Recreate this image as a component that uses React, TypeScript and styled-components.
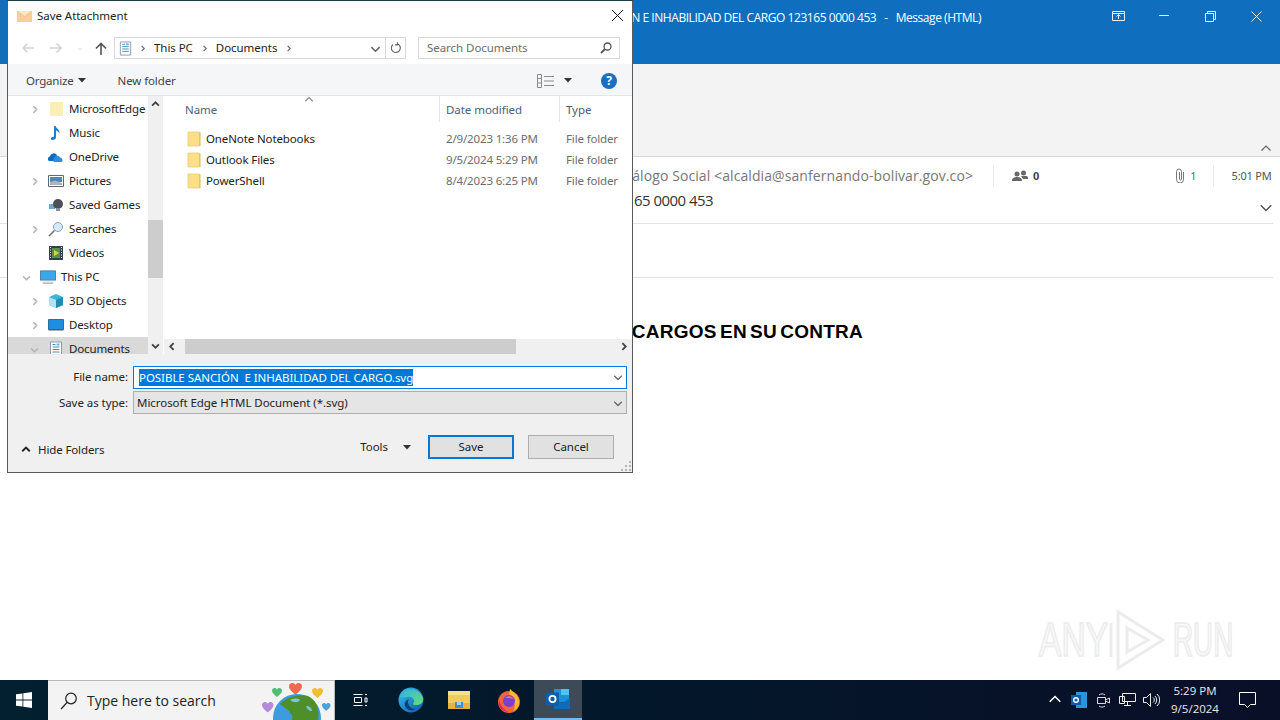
import React from 'react';
import styled, { createGlobalStyle } from 'styled-components';

const Global = createGlobalStyle`
  html, body { margin: 0; padding: 0; height: 100%; overflow: hidden; background: #fff; }
  * { box-sizing: border-box; }
`;
const font = `"Noto Sans", "Open Sans", sans-serif`;

const Desktop = styled.div`
  position: relative; width: 1280px; height: 720px; overflow: hidden;
  display: flex; flex-direction: column; font-family: ${font}; background: #fff;
`;
const MailWindow = styled.div`flex: 1; display: flex; flex-direction: column; min-height: 0;`;
const MailTitleBar = styled.div`
  height: 64px; flex: none; background: #106ebe; color: #fff; display: flex; align-items: flex-start;
`;
const MailTitle = styled.div`
  width: 981px; padding-top: 10px; white-space: pre; font-size: 12px; line-height: 16px;
  letter-spacing: -0.45px; display: flex; justify-content: flex-end;
  font-family: "Open Sans", sans-serif;
`;
const WinControls = styled.div`margin-left: auto; margin-right: 1px; display: flex; width: 184px; height: 32px;`;
const WinControl = styled.div`
  width: 46px; height: 32px; display: flex; align-items: center; justify-content: center; color: #e8f1fa;
`;
const Ribbon = styled.div`
  height: 93px; flex: none; background: #f3f3f3; border-bottom: 1px solid #d4d4d4; display: flex; align-items: flex-end;
  justify-content: flex-end; padding: 0 8px 1px 0; color: #666;
`;
const MailHeader = styled.div`height: 67px; flex: none; margin-right: 7px; border-bottom: 1px solid #e3e3e3; display: flex; flex-direction: column;`;
const HeaderRow = styled.div`height: 36px; flex: none; display: flex; align-items: center; color: #555; font-size: 11px; padding-top: 1px;`;
const Sender = styled.div`
  width: 973px; flex: none; display: flex; justify-content: flex-end; white-space: nowrap; font-size: 14px; color: #777;
  font-family: "Open Sans", sans-serif; letter-spacing: 0.09px;
`;
const HeaderSep = styled.div<{ $l: number }>`width: 1px; height: 22px; background: #e9e9e9; margin-left: ${p => p.$l}px;`;
const HeaderGlyph = styled.span<{ $l: number }>`margin-left: ${p => p.$l}px; display: flex;`;
const PeopleCount = styled.span`font-weight: 700; font-size: 11px; margin-left: 5px; color: #444;`;
const CountText = styled.span`margin-left: 5px; color: #666;`;
const TimeText = styled.span`margin-left: 18px; color: #555; white-space: nowrap; font-size: 11px; letter-spacing: -0.2px;`;
const SubjectRow = styled.div`display: flex; align-items: center; height: 22px; margin-top: -4px; flex: none;`;
const Subject = styled.div`
  width: 713px; flex: none; display: flex; justify-content: flex-end; font-size: 15px; color: #333; white-space: nowrap;
  font-family: "Open Sans", sans-serif; letter-spacing: -0.55px;
`;
const SubjectChevron = styled.div`margin-left: auto; margin-top: 14px; display: flex; color: #555;`;
const InfoBar = styled.div`height: 54px; flex: none; margin-right: 7px; border-bottom: 1px solid #e3e3e3;`;
const Body = styled.div`flex: 1; padding-top: 42px;`;
const BodyTitle = styled.div`
  width: 863px; display: flex; justify-content: flex-end; white-space: pre;
  font-family: "Liberation Sans", sans-serif; font-size: 19px; font-weight: 700; color: #000; letter-spacing: 0.25px; word-spacing: -2.3px; line-height: 24px;
`;

const Dialog = styled.div`
  position: absolute; left: 7px; top: 0; width: 626px; height: 473px; background: #fff;
  border: 1px solid #5a5a5a; border-top-color: #1a3a4a; display: flex; flex-direction: column; color: #333;
  font-size: 11.5px; line-height: 16px; letter-spacing: -0.05px;
`;
const DialogTitle = styled.div`height: 29px; display: flex; align-items: center; padding-left: 9px; color: #222; flex: none;`;
const TitleLabel = styled.span`margin-left: 5px;`;
const CloseBtn = styled.div`margin-left: auto; width: 30px; display: flex; justify-content: center; color: #111;`;
const NavBar = styled.div`height: 34px; flex: none; display: flex; align-items: center; padding: 2px 0 0 13px;`;
const NavBtn = styled.div<{ $w: number; $l?: number }>`width: ${p => p.$w}px; margin-left: ${p => p.$l ?? 0}px; display: flex; justify-content: center; color: #d3d3d3;`;
const AddressBox = styled.div`
  width: 292px; height: 22px; border: 1px solid #d9d9d9; display: flex; align-items: center; padding-left: 3px; color: #222;
`;
const Crumb = styled.span`margin-left: 8px; margin-right: 8px; white-space: nowrap;`;
const CrumbArrow = styled.span<{ $l?: number }>`display: flex; color: #666; margin-left: ${p => p.$l ?? 0}px;`;
const AddressEnd = styled.div`margin-left: auto; display: flex; align-items: center; height: 100%; color: #666;`;
const AddressDrop = styled.div`width: 19px; display: flex; justify-content: center;`;
const AddressRefresh = styled.div`width: 20px; height: 100%; display: flex; justify-content: center; align-items: center; border-left: 1px solid #d9d9d9;`;
const SearchBox = styled.div`
  width: 202px; height: 22px; margin-left: 12px; border: 1px solid #d9d9d9; display: flex; align-items: center; padding: 0 7px 0 8px; color: #6d6d6d;
`;
const SearchIcon = styled.span`margin-left: auto; display: flex; color: #555;`;
const Toolbar = styled.div`
  height: 32px; flex: none; background: #f5f6f7; border-bottom: 1px solid #e6e6e6; display: flex; align-items: center; padding: 2px 0 0 18px; color: #444;
`;
const ToolLabel = styled.span`display: flex; align-items: center; gap: 4px; letter-spacing: -0.2px;`;
const NewFolder = styled.span`margin-left: 32px; letter-spacing: -0.1px;`;
const ViewGroup = styled.div`margin-left: auto; display: flex; align-items: center; gap: 10px; margin-right: 15px;`;
const HelpCircle = styled.div`
  width: 16px; height: 16px; margin-left: 19px; border-radius: 50%; background: #1a6fc0; color: #fff; font-size: 12px; font-weight: 700;
  display: flex; align-items: center; justify-content: center; line-height: 1;
`;
const Main = styled.div`height: 258px; flex: none; display: flex; background: #fff;`;
const Tree = styled.div`width: 140px; flex: none; overflow: hidden; padding-top: 1px;`;
const TreeRow = styled.div<{ $selected?: boolean; $indent?: number }>`
  height: 24px; display: flex; align-items: center; white-space: nowrap; color: #222; letter-spacing: -0.13px; line-height: 10px;
  padding-left: ${p => p.$indent ?? 22}px; background: ${p => (p.$selected ? '#d9d9d9' : 'transparent')};
`;
const Expander = styled.span`width: 18px; flex: none; display: flex; justify-content: flex-start; color: #b5b5b5;`;
const TreeIcon = styled.span`width: 16px; height: 16px; flex: none; display: flex; margin-right: 5px;`;
const VScroll = styled.div`width: 15px; flex: none; background: #f0f0f0; display: flex; flex-direction: column; margin-right: 1px;`;
const VArrow = styled.div`height: 17px; flex: none; display: flex; align-items: center; justify-content: center; color: #444;`;
const VTrack = styled.div`flex: 1; padding-top: 107px;`;
const VThumb = styled.div`height: 58px; background: #cdcdcd;`;
const ListPane = styled.div`flex: 1; min-width: 0; display: flex; flex-direction: column;`;
const ListScroll = styled.div`flex: 1; min-height: 0; overflow: hidden;`;
const Columns = styled.div`display: grid; grid-template-columns: 275px 120px 1fr;`;
const ColHead = styled.div<{ $sep?: boolean }>`
  height: 26px; display: flex; align-items: center; padding: 2px 0 0 ${p => (p.$sep ? 6 : 21)}px; color: #4c607a; position: relative;
  border-left: ${p => (p.$sep ? '1px solid #e5e5e5' : 'none')};
`;
const SortCaret = styled.span`position: absolute; left: 140px; top: -1px; display: flex; color: #888;`;
const FileRow = styled.div`height: 21px; display: grid; grid-template-columns: 275px 120px 1fr; align-items: center; color: #6d6d6d;`;
const FileRows = styled.div`padding-top: 6.5px;`;
const FileName = styled.div`display: flex; align-items: center; padding-left: 22px; color: #222; white-space: nowrap; letter-spacing: -0.12px;`;
const FileIcon = styled.span`display: flex; margin-right: 4px;`;
const FileCell = styled.div<{ $pad: number }>`padding-left: ${p => p.$pad}px; white-space: nowrap; overflow: hidden; letter-spacing: -0.15px;`;
const HScroll = styled.div`height: 15px; flex: none; background: #f0f0f0; display: flex; align-items: center;`;
const HArrow = styled.div`width: 17px; flex: none; display: flex; justify-content: center; color: #444;`;
const HThumb = styled.div`width: 331px; height: 15px; margin-left: 4px; background: #cdcdcd;`;
const HArrowEnd = styled(HArrow)`margin-left: auto;`;
const Footer = styled.div`flex: 1; background: #f0f0f0; display: flex; flex-direction: column; position: relative; padding-top: 12px;`;
const FieldRow = styled.div`display: flex; align-items: center; height: 23px; margin-bottom: 2px; flex: none;`;
const FieldLabel = styled.div`width: 120px; text-align: right; margin-right: 5px; color: #222; white-space: nowrap;`;
const NameLabel = styled(FieldLabel)`padding-bottom: 2px;`;
const FileInput = styled.div`
  width: 494px; height: 23px; background: #fff; border: 1px solid #0078d7; display: flex; align-items: center; padding: 0 0 1px 5px; color: #fff;
`;
const Selected = styled.span`background: #0078d7; color: #fff; line-height: 17px; white-space: pre;`;
const ComboEnd = styled.span`margin-left: auto; width: 17px; display: flex; justify-content: center; color: #666;`;
const TypeSelect = styled(FileInput)`background: #e5e5e5; border-color: #adadad; color: #222; padding: 0 0 0 3px;`;
const ActionRow = styled.div`display: flex; align-items: center; margin-top: 18px; height: 26px; padding-left: 13px;`;
const HideFolders = styled.div`display: flex; align-items: center; gap: 7px; margin-top: 6px; color: #222; letter-spacing: -0.12px;`;
const ToolsLabel = styled.div`margin-left: auto; display: flex; align-items: center; gap: 15px; margin-right: 17px; color: #222;`;
const DlgButton = styled.div<{ $primary?: boolean }>`
  width: 86px; height: 24px; display: flex; align-items: center; justify-content: center; background: #e1e1e1; color: #222;
  border: ${p => (p.$primary ? '2px solid #0078d7' : '1px solid #adadad')}; margin-right: ${p => (p.$primary ? 14 : 18)}px;
`;
const Grip = styled.span`position: absolute; right: 1px; bottom: 1px; display: flex;`;

const Taskbar = styled.div`
  height: 40px; flex: none; background: linear-gradient(90deg, #02202f 0%, #03172a 50%, #0a0f28 100%); display: flex; align-items: stretch; color: #fff;
`;
const StartBtn = styled.div`width: 48px; display: flex; align-items: center; justify-content: center;`;
const TaskSearch = styled.div`
  width: 287px; background: #f3f3f3; border-top: 1px solid #b9b9b9; border-right: 1px solid #b9b9b9; display: flex; align-items: center; padding-left: 12px; color: #222;
  font-size: 14px; overflow: hidden; position: relative; font-family: "Open Sans", sans-serif;
`;
const SearchText = styled.span`margin-left: 9px; white-space: nowrap;`;
const Bling = styled.span`position: absolute; left: 212px; top: -1px; display: flex;`;
const TaskApp = styled.div<{ $active?: boolean; $l?: number }>`
  width: 48px; margin-left: ${p => p.$l ?? 0}px; display: flex; align-items: center; justify-content: center;
  background: ${p => (p.$active ? '#3d4a57' : 'transparent')};
  border-bottom: ${p => (p.$active ? '2px solid #76b9ed' : 'none')};
`;
const Tray = styled.div`margin-left: auto; margin-right: 13px; display: flex; align-items: center;`;
const TrayItem = styled.div`width: 24px; display: flex; justify-content: center; align-items: center;`;
const Clock = styled.div`width: 64px; text-align: center; font-size: 11.5px; line-height: 18px; color: #e8e8e8; font-family: "Open Sans", sans-serif; white-space: nowrap;`;
const Notify = styled.div`width: 40px; display: flex; justify-content: center;`;
const Watermark = styled.div`
  position: absolute; left: 1039px; top: 608px; display: flex; align-items: center; pointer-events: none;
  font-family: "Liberation Sans", sans-serif; font-size: 48px; line-height: 64px; color: #f8f8f8; -webkit-text-stroke: 1.5px #ececec;
  text-shadow: 0 0 2px #e4e4e4;
`;
const WmWord = styled.span`display: inline-block; transform: scaleX(.7); transform-origin: left center; width: 70px; white-space: nowrap;`;
const WmWordEnd = styled(WmWord)`width: 64px; margin-left: 8px; transform: scaleX(.58);`;

const Chevron = ({ dir = 'right', size = 8, sw = 1.3 }: { dir?: string; size?: number; sw?: number }) => {
  const p: Record<string, string> = { right: 'M3 1l3 3-3 3', left: 'M5 1L2 4l3 3', down: 'M1 3l3 3 3-3', up: 'M1 5l3-3 3 3' };
  return <svg width={size} height={size} viewBox="0 0 8 8" fill="none" stroke="currentColor" strokeWidth={sw}><path d={p[dir]} /></svg>;
};
const Caret = () => <svg width="8" height="5" viewBox="0 0 8 5" fill="#333"><path d="M0 0h8L4 4.500z" /></svg>;
const Folder = () => (
  <svg width="16" height="16" viewBox="0 0 16 16"><path d="M2 1h11.500v14H2z" fill="#fbdf87" stroke="#e8c765" strokeWidth=".7" /><path d="M13.500 1.500v13.500h1V1.500z" fill="#d8b65d" /></svg>
);
const Arrow = ({ d = 'l' }: { d?: 'l' | 'r' }) => (
  <svg width="14" height="12" viewBox="0 0 14 12" fill="none" stroke="#d3d3d3" strokeWidth="1.500">
    <path d={d === 'l' ? 'M13 6H2M6.500 1.500L2 6l4.500 4.500' : 'M1 6h11M7.500 1.500L12 6l-4.500 4.500'} />
  </svg>
);
const DocIcon = ({ s = 16 }: { s?: number }) => (
  <svg width={s} height={s} viewBox="0 0 16 16"><path d="M2.500 1h11v14h-11z" fill="#fff" stroke="#8b9bab" /><path d="M4.500 3.500h3M4.500 6h7M4.500 8.500h7M4.500 11h7" stroke="#3a8dc5" /><path d="M8.500 2.500h3v2h-3z" fill="#6fb3dc" /></svg>
);
const Heart = ({ x, y, s, fill }: { x: number; y: number; s: number; fill: string }) => (
  <path transform={`translate(${x} ${y}) scale(${s})`} fill={fill} d="M0 2.500C0 0 3.500-1 5 1.500 6.500-1 10 0 10 2.500 10 5.500 6 8 5 9 4 8 0 5.500 0 2.500z" />
);
const tree: { label: string; indent?: number; exp?: 'right' | 'down'; sel?: boolean; icon: React.ReactNode }[] = [
  { label: 'MicrosoftEdge', exp: 'right', icon: <svg width="16" height="16"><path d="M2 1h13v14H2z" fill="#fdeeb6" /></svg> },
  { label: 'Music', icon: <svg width="16" height="16" viewBox="0 0 16 16"><path d="M6 1h1.500c.3 2.500 4.500 3 4 7.500-.5-1.500-2-2.500-3.500-3v7c0 2-2.500 3-4.500 2.300-1.500-1 0-3.300 2.500-3z" fill="#1f7ed0" /></svg> },
  { label: 'OneDrive', icon: <svg width="16" height="16" viewBox="0 0 16 16"><path d="M1 12a2.500 2.500 0 0 1 .8-4.500A4 4 0 0 1 9 6l-3 6z" fill="#0f6cbd" /><path d="M6 13a2.200 2.200 0 0 1 0-3.500c.5-3 5-4 6-1 2.500 0 3.500 3.500 1.500 4.500z" fill="#2a8fdc" /></svg> },
  { label: 'Pictures', exp: 'right', icon: <svg width="16" height="16" viewBox="0 0 16 16"><path d="M.5 2.500h15v11H.5z" fill="#fff" stroke="#5a6b7b" /><path d="M2 4h12v5H2z" fill="#4d86b8" /><path d="M2 9l5-1.500L14 10v2H2z" fill="#aab6bf" /></svg> },
  { label: 'Saved Games', icon: <svg width="16" height="16" viewBox="0 0 16 16"><path d="M1 7h6v5H1z" fill="#6ea6d8" /><circle cx="10" cy="7" r="5" fill="#4c4f55" /><path d="M8 11h4v3H8z" fill="#8b8f95" /></svg> },
  { label: 'Searches', exp: 'right', icon: <svg width="16" height="16" viewBox="0 0 16 16" fill="none"><circle cx="10" cy="6" r="4.500" fill="#d4ecfa" stroke="#8aa0b4" /><path d="M6.500 9.500L1 15" stroke="#6a6a6a" strokeWidth="1.500" /></svg> },
  { label: 'Videos', icon: <svg width="16" height="16" viewBox="0 0 16 16"><path d="M1 1h14v14H1z" fill="#333f4f" /><path d="M4 3h8v10H4z" fill="#5a8f4f" /><path d="M6 5l5 3-5 3z" fill="#d6d44c" /><path d="M2 2.500h1M2 5h1M2 7.500h1M2 10h1M2 12.500h1M13 2.500h1M13 5h1M13 7.500h1M13 10h1M13 12.500h1" stroke="#fff" /></svg> },
  { label: 'This PC', indent: 14, exp: 'down', icon: <svg width="17" height="16" viewBox="0 0 17 16"><path d="M.5 1.500h16v10H.5z" fill="#39a8ea" stroke="#4a7ca5" /><path d="M.5 11.500h16v1H.5z" fill="#b8c4cc" /><path d="M3 14.500h11" stroke="#7b8894" /></svg> },
  { label: '3D Objects', exp: 'right', icon: <svg width="16" height="16" viewBox="0 0 16 16"><path d="M1 4l7-3 7 3v8l-7 3-7-3z" fill="#39b6d8" /><path d="M1 4l7 3v8l-7-3z" fill="#aee3ef" /><path d="M15 4L8 7v8l7-3z" fill="#1d8db3" /></svg> },
  { label: 'Desktop', exp: 'right', icon: <svg width="16" height="16" viewBox="0 0 16 16"><path d="M.5 2.500h15v10H.5z" fill="#1c8fe0" stroke="#2a6ea5" /><path d="M.5 12.500h15v1H.5z" fill="#4a5a68" /></svg> },
  { label: 'Documents', exp: 'down', sel: true, icon: <DocIcon /> },
];
const files = [
  ['OneNote Notebooks', '2/9/2023 1:36 PM'],
  ['Outlook Files', '9/5/2024 5:29 PM'],
  ['PowerShell', '8/4/2023 6:25 PM'],
];

export default function App() {
  return (
    <Desktop>
      <Global />
      <MailWindow>
        <MailTitleBar>
          <MailTitle>{'N E INHABILIDAD DEL CARGO 123165 0000 453   -   Message (HTML)'}</MailTitle>
          <WinControls>
            <WinControl>
              <svg width="13" height="12" viewBox="0 0 13 12" fill="none" stroke="currentColor"><path d="M.5 1.500h12v9H.5zM.5 3.500h12M6.500 9V5M4.500 6.500l2-2 2 2" /></svg>
            </WinControl>
            <WinControl><svg width="10" height="2"><path d="M0 .5h10" stroke="currentColor" /></svg></WinControl>
            <WinControl><svg width="11" height="11" viewBox="0 0 11 11" fill="none" stroke="currentColor"><path d="M.5 2.500h8v8h-8zM2.500 2.500v-2h8v8h-2" /></svg></WinControl>
            <WinControl><svg width="11" height="11" viewBox="0 0 11 11" fill="none" stroke="currentColor"><path d="M.5.500l10 10M10.500.500l-10 10" /></svg></WinControl>
          </WinControls>
        </MailTitleBar>
        <Ribbon><Chevron dir="up" size={12} sw={.8} /></Ribbon>
        <MailHeader>
          <HeaderRow>
            <Sender>álogo Social &lt;alcaldia@sanfernando-bolivar.gov.co&gt;</Sender>
            <HeaderSep $l={20} />
            <HeaderGlyph $l={18}>
              <svg width="16" height="12" viewBox="0 0 16 12" fill="#666"><circle cx="5" cy="4" r="2.500" /><circle cx="11.500" cy="3" r="2.500" /><path d="M0 11c0-3 2-4 5-4s5 1 5 4zM9 6h6c1 1 1 2 1 3h-5z" /></svg>
            </HeaderGlyph>
            <PeopleCount>0</PeopleCount>
            <HeaderGlyph $l={136}>
              <svg width="10" height="15" viewBox="0 0 10 15" fill="none" stroke="#777"><path d="M8.500 4v7.500a3.500 3.500 0 0 1-7 0V3.500a2.500 2.500 0 0 1 5 0v7.500a1 1 0 0 1-2 0V4" /></svg>
            </HeaderGlyph>
            <CountText>1</CountText>
            <HeaderSep $l={16} />
            <TimeText>5:01 PM</TimeText>
          </HeaderRow>
          <SubjectRow>
            <Subject>65 0000 453</Subject>
            <SubjectChevron><Chevron dir="down" size={14} sw={.9} /></SubjectChevron>
          </SubjectRow>
        </MailHeader>
        <InfoBar />
        <Body><BodyTitle>CARGOS EN SU CONTRA</BodyTitle></Body>
      </MailWindow>

      <Taskbar>
        <StartBtn>
          <svg width="16" height="16" viewBox="0 0 16 16" fill="#fff"><path d="M0 2.300l6.500-.9v6.200H0zM7.300 1.300L16 0v7.600H7.300zM0 8.400h6.500v6.200L0 13.700zM7.300 8.400H16V16l-8.700-1.300z" /></svg>
        </StartBtn>
        <TaskSearch>
          <svg width="18" height="18" viewBox="0 0 18 18" fill="none" stroke="#222" strokeWidth="1.200"><circle cx="11" cy="6.500" r="5.300" /><path d="M7 10.500L1 17" /></svg>
          <SearchText>Type here to search</SearchText>
          <Bling>
            <svg width="72" height="40" viewBox="0 0 72 40">
              <circle cx="37" cy="38" r="24" fill="#3d9be0" />
              <path d="M20 24c8-8 20-10 28-8 8 4 12 12 10 24H32c2-6-4-10-12-16z" fill="#4f8f2a" />
              <path d="M30 20c4-2 8-2 10 0-2 3-6 3-10 0zM46 26c3 0 6 2 6 5-3 0-5-2-6-5z" fill="#7ec3ea" />
              <Heart x={2} y={22} s={1.150} fill="#b58ad8" />
              <Heart x={12} y={8} s={1} fill="#4fbe73" />
              <Heart x={29} y={3} s={1.300} fill="#f2694f" />
              <Heart x={52} y={8} s={1.100} fill="#f2bd2f" />
              <Heart x={62} y={23} s={.85} fill="#4aa3dc" />
            </svg>
          </Bling>
        </TaskSearch>
        <TaskApp $l={1}>
          <svg width="16" height="16" viewBox="0 0 16 16" fill="none" stroke="#fff"><path d="M1.500 2.500h9M1.500 13.500h9M2.500 5.500h7v5h-7zM13 2.500h2M13 6h2v4h-2zM13 13.500h2" /></svg>
        </TaskApp>
        <TaskApp $l={3}>
          <svg width="26" height="26" viewBox="0 0 26 26">
            <defs>
              <linearGradient id="ed1" x1="0" y1="0" x2="1" y2="1"><stop offset="0" stopColor="#35c1f1" /><stop offset="1" stopColor="#0c59a4" /></linearGradient>
              <linearGradient id="ed2" x1="0" y1="0" x2="1" y2="1"><stop offset="0" stopColor="#2bb3e8" /><stop offset="1" stopColor="#6fdc70" /></linearGradient>
            </defs>
            <circle cx="13" cy="13" r="12.500" fill="url(#ed1)" />
            <path d="M2 10C5 1 20-2 25 11c1 5-3 7-7 7-4 0-3-2-2-3 1-3-3-6-7-5-3 0-5 1-7 0z" fill="url(#ed2)" />
            <path d="M11 12c-3 4 1 10 6 10-2 2-8 2-10-3-1-3 1-6 4-7z" fill="#0c3f7a" />
          </svg>
        </TaskApp>
        <TaskApp>
          <svg width="22" height="18" viewBox="0 0 22 18"><path d="M0 0h22v18H0z" fill="#f3cb5c" /><path d="M0 4h22V0H0z" fill="#f8df8d" /><path d="M0 12h22v6H0z" fill="#e9b23e" /><path d="M7 11h8v6H7z" fill="#3f8fd0" /><path d="M9 11v3h4v-3" fill="#9fd0ee" /></svg>
        </TaskApp>
        <TaskApp $l={2}>
          <svg width="24" height="25" viewBox="0 0 24 25">
            <circle cx="12" cy="14" r="11" fill="#f0653a" />
            <path d="M13 1c3 3 8 5 9 11 1 5-2 10-6 11 3-4 2-8-1-11-3-2-3-6-2-11z" fill="#fbb931" />
            <path d="M2 12c-2 6 3 12 10 12-5-2-8-6-10-12z" fill="#e22a55" />
            <circle cx="12" cy="13" r="6" fill="#7b3fd0" />
            <path d="M8 10c3-3 7-2 9 1-3-1-6-1-9-1z" fill="#f77b4a" />
          </svg>
        </TaskApp>
        <TaskApp $active $l={1}>
          <svg width="24" height="22" viewBox="0 0 24 22">
            <path d="M8 1h15v13H8z" fill="#1e90d8" />
            <path d="M15 1h8v6h-8z" fill="#50c3ef" />
            <path d="M8 10l8 5 8-5v11H8z" fill="#0f6cbd" />
            <path d="M0 4.500h13v13H0z" fill="#0f5cab" />
            <circle cx="6.500" cy="11" r="3.100" fill="none" stroke="#fff" strokeWidth="1.800" />
          </svg>
        </TaskApp>
        <Tray>
          <TrayItem><Chevron dir="up" size={14} sw={.9} /></TrayItem>
          <TrayItem>
            <svg width="16" height="16" viewBox="0 0 16 16"><path d="M5 0h11v16H5z" fill="#2a94dc" /><path d="M0 3h10v10H0z" fill="#0f5cab" /><circle cx="5" cy="8" r="2.300" fill="none" stroke="#fff" strokeWidth="1.400" /></svg>
          </TrayItem>
          <TrayItem>
            <svg width="16" height="16" viewBox="0 0 16 16" fill="none" stroke="#ddd"><path d="M2.500 5.500h8v6h-8zM10.500 8l4-2v5l-4-2M4 3c2-1.500 4-1.500 6 0M4 14c2 1.500 4 1.500 6 0" /></svg>
          </TrayItem>
          <TrayItem>
            <svg width="17" height="15" viewBox="0 0 17 15" fill="none" stroke="#eee"><path d="M3.500.500h13v8h-13zM.5 3.500h5v7h-5zM5 12.500h7M8.500 8.500v4" /></svg>
          </TrayItem>
          <TrayItem>
            <svg width="17" height="14" viewBox="0 0 17 14" fill="none" stroke="#eee"><path d="M.5 4.500h3l4-4v13l-4-4h-3zM10 4.500a3 3 0 0 1 0 5M12 3a5.500 5.500 0 0 1 0 8M14 1a8 8 0 0 1 0 12" /></svg>
          </TrayItem>
          <Clock>5:29 PM<br />9/5/2024</Clock>
          <Notify>
            <svg width="17" height="16" viewBox="0 0 17 16" fill="none" stroke="#fff"><path d="M.5.500h16v12h-5l-3 3-3-3h-5z" /></svg>
          </Notify>
        </Tray>
      </Taskbar>

      <Watermark>
        <WmWord>ANY</WmWord>
        <svg width="56" height="62" viewBox="0 0 56 62" fill="none" stroke="#ececec" strokeWidth="3"><path d="M2 14v34M9 3v56l45-28zM18 19v24l21-12z" /></svg>
        <WmWordEnd>RUN</WmWordEnd>
      </Watermark>

      <Dialog>
        <DialogTitle>
          <svg width="15" height="12" viewBox="0 0 15 12"><path d="M0 1h15v11H0z" fill="#f6cf95" /><path d="M0 1l7.500 5.500L15 1" fill="#fbe6c3" stroke="#e8b878" strokeWidth=".6" /></svg>
          <TitleLabel>Save Attachment</TitleLabel>
          <CloseBtn><svg width="13" height="13" viewBox="0 0 13 13" fill="none" stroke="currentColor"><path d="M1 1l11 11M12 1L1 12" /></svg></CloseBtn>
        </DialogTitle>
        <NavBar>
          <NavBtn $w={14}><Arrow /></NavBtn>
          <NavBtn $w={42}><Arrow d="r" /></NavBtn>
          <NavBtn $w={6}><Chevron dir="down" size={7} /></NavBtn>
          <NavBtn $w={26} $l={5}>
            <svg width="12" height="13" viewBox="0 0 12 13" fill="none" stroke="#555" strokeWidth="1.600"><path d="M6 13V2M1 6.500L6 1.500l5 5" /></svg>
          </NavBtn>
          <AddressBox>
            <DocIcon s={15} />
            <CrumbArrow $l={6}><Chevron size={7} /></CrumbArrow>
            <Crumb>This PC</Crumb>
            <CrumbArrow><Chevron size={7} /></CrumbArrow>
            <Crumb>Documents</Crumb>
            <CrumbArrow><Chevron size={7} /></CrumbArrow>
            <AddressEnd>
              <AddressDrop><Chevron dir="down" size={11} sw={1.100} /></AddressDrop>
              <AddressRefresh>
                <svg width="12" height="12" viewBox="0 0 12 12" fill="none" stroke="#666" strokeWidth="1.200"><path d="M7.500 1.800A4.500 4.500 0 1 1 3 2.500M7.500 .3v2.500H5" /></svg>
              </AddressRefresh>
            </AddressEnd>
          </AddressBox>
          <SearchBox>
            Search Documents
            <SearchIcon>
              <svg width="12" height="12" viewBox="0 0 12 12" fill="none" stroke="currentColor" strokeWidth="1.300"><circle cx="7.500" cy="4.500" r="3.500" /><path d="M5 7L1 11" strokeWidth="1.800" /></svg>
            </SearchIcon>
          </SearchBox>
        </NavBar>
        <Toolbar>
          <ToolLabel>Organize <Caret /></ToolLabel>
          <NewFolder>New folder</NewFolder>
          <ViewGroup>
            <svg width="17" height="14" viewBox="0 0 17 14" fill="none" stroke="#8a8a8a"><path d="M.5.500h4v13h-4zM.5 4.500h4M.5 9h4M7 2.500h10M7 7h10M7 11.500h10" /></svg>
            <Caret />
            <HelpCircle>?</HelpCircle>
          </ViewGroup>
        </Toolbar>
        <Main>
          <Tree>
            {tree.map(r => (
              <TreeRow key={r.label} $selected={r.sel} $indent={r.indent}>
                <Expander>{r.exp && <Chevron dir={r.exp} size={9} />}</Expander>
                <TreeIcon>{r.icon}</TreeIcon>
                {r.label}
              </TreeRow>
            ))}
          </Tree>
          <VScroll>
            <VArrow><Chevron dir="up" size={9} sw={1.600} /></VArrow>
            <VTrack><VThumb /></VTrack>
            <VArrow><Chevron dir="down" size={9} sw={1.600} /></VArrow>
          </VScroll>
          <ListPane>
            <ListScroll>
              <Columns>
                <ColHead>Name<SortCaret><Chevron dir="up" size={10} sw={.9} /></SortCaret></ColHead>
                <ColHead $sep>Date modified</ColHead>
                <ColHead $sep>Type</ColHead>
              </Columns>
              <FileRows>
                {files.map(([n, d]) => (
                  <FileRow key={n}>
                    <FileName><FileIcon><Folder /></FileIcon>{n}</FileName>
                    <FileCell $pad={7}>{d}</FileCell>
                    <FileCell $pad={7}>File folder</FileCell>
                  </FileRow>
                ))}
              </FileRows>
            </ListScroll>
            <HScroll>
              <HArrow><Chevron dir="left" size={9} sw={1.600} /></HArrow>
              <HThumb />
              <HArrowEnd><Chevron dir="right" size={9} sw={1.600} /></HArrowEnd>
            </HScroll>
          </ListPane>
        </Main>
        <Footer>
          <FieldRow>
            <NameLabel>File name:</NameLabel>
            <FileInput>
              <Selected>POSIBLE SANCIÓN  E INHABILIDAD DEL CARGO.svg</Selected>
              <ComboEnd><Chevron dir="down" size={10} sw={1} /></ComboEnd>
            </FileInput>
          </FieldRow>
          <FieldRow>
            <FieldLabel>Save as type:</FieldLabel>
            <TypeSelect>
              Microsoft Edge HTML Document (*.svg)
              <ComboEnd><Chevron dir="down" size={10} sw={1} /></ComboEnd>
            </TypeSelect>
          </FieldRow>
          <ActionRow>
            <HideFolders><Chevron dir="up" size={10} sw={1.500} />Hide Folders</HideFolders>
            <ToolsLabel>Tools <Caret /></ToolsLabel>
            <DlgButton $primary>Save</DlgButton>
            <DlgButton>Cancel</DlgButton>
          </ActionRow>
          <Grip>
            <svg width="10" height="10" viewBox="0 0 10 10" fill="#b5b5b5"><path d="M8 0h2v2H8zM4 4h2v2H4zM8 4h2v2H8zM0 8h2v2H0zM4 8h2v2H4zM8 8h2v2H8z" /></svg>
          </Grip>
        </Footer>
      </Dialog>
    </Desktop>
  );
}
